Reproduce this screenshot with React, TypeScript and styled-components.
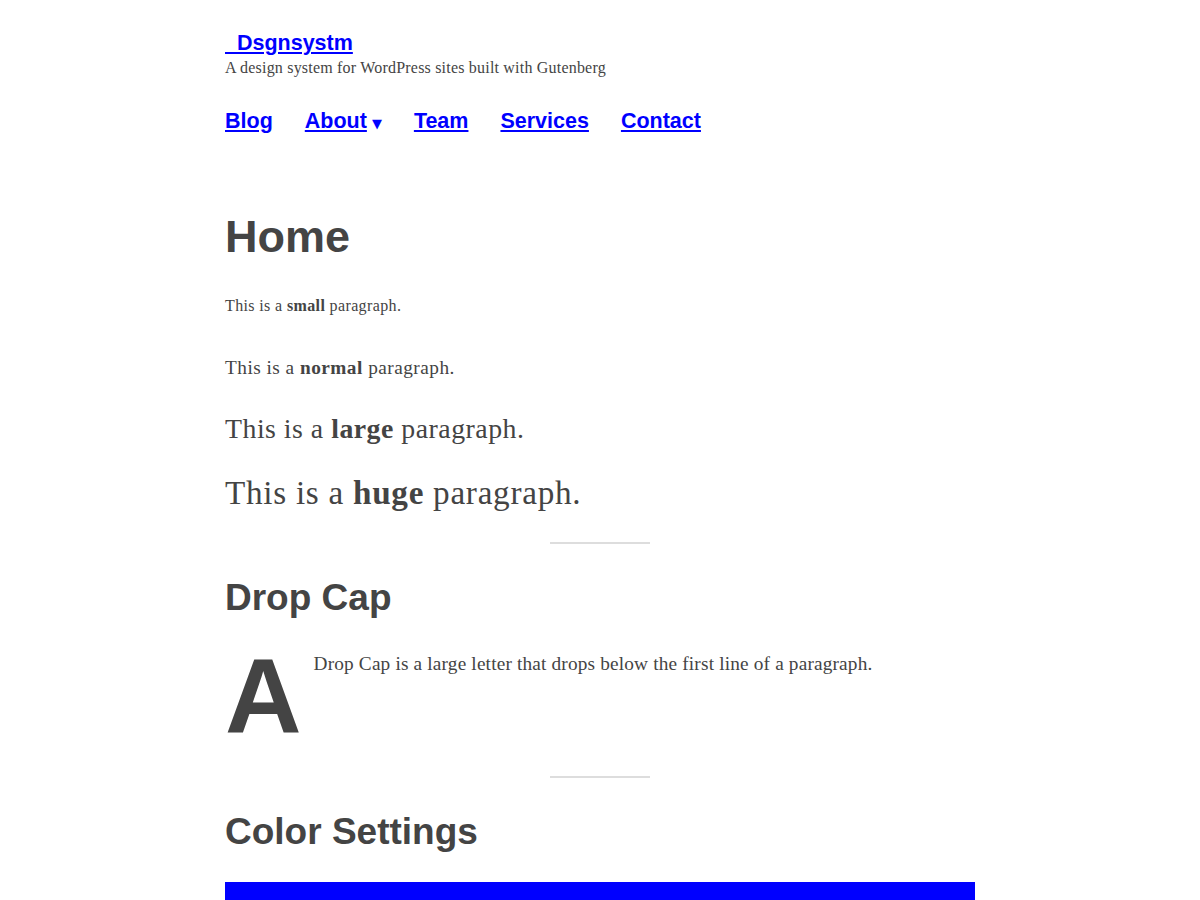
import React from "react";
import styled, { createGlobalStyle } from "styled-components";

const Global = createGlobalStyle`
  html, body { margin: 0; padding: 0; background: #fff; }
  body { font-family: Georgia, "Liberation Serif", serif; color: #444; }
`;

const Page = styled.div`
  width: 750px;
  margin: 0 auto;
  padding-top: 30px;
`;

const Header = styled.header`
  display: flex;
  flex-direction: column;
`;

const SiteTitle = styled.a`
  font-family: "Liberation Sans", Arial, sans-serif;
  font-weight: 700;
  font-size: 21.5px;
  line-height: 26px;
  color: #0000ff;
  text-decoration: underline;
  align-self: flex-start;
  white-space: pre;
`;

const Tagline = styled.p`
  margin: 0;
  font-size: 16px;
  letter-spacing: 0.2px;
  line-height: 24px;
  color: #444;
`;

const Nav = styled.nav`
  display: flex;
  gap: 32px;
  margin-top: 27px;
`;

const NavItem = styled.span`
  display: inline-flex;
  align-items: baseline;
`;

const NavLink = styled.a`
  font-family: "Liberation Sans", Arial, sans-serif;
  font-weight: 700;
  font-size: 21.5px;
  line-height: 28px;
  color: #0000ff;
  text-decoration: underline;
`;

const Caret = styled.span`
  font-family: "DejaVu Sans", sans-serif;
  font-size: 13px;
  margin-left: 5px;
  color: #0000ff;
`;

const Main = styled.main`
  margin-top: 74px;
`;

const H1 = styled.h1`
  font-family: "Liberation Sans", Arial, sans-serif;
  font-weight: 700;
  font-size: 45px;
  line-height: 56px;
  margin: 0 0 28px;
  color: #444;
`;

const H2 = styled.h2`
  font-family: "Liberation Sans", Arial, sans-serif;
  font-weight: 700;
  font-size: 37px;
  line-height: 44px;
  margin: 0 0 28px;
  color: #444;
`;

const Para = styled.p<{ $size: number; $gap: number; $track: number }>`
  margin: 0 0 ${(p) => p.$gap}px;
  font-size: ${(p) => p.$size}px;
  letter-spacing: ${(p) => p.$track}px;
  line-height: 1.6;
  color: #444;
`;

const Sep = styled.hr`
  width: 100px;
  height: 2px;
  border: 0;
  background: #dddddd;
  margin: 0 auto 32px;
`;

const DropRow = styled.div`
  display: flex;
  align-items: flex-start;
  gap: 12px;
  margin-bottom: 32px;
`;

const Cap = styled.span`
  font-family: "Liberation Sans", Arial, sans-serif;
  font-weight: 700;
  font-size: 106px;
  line-height: 96px;
  color: #444;
`;

const DropText = styled.p`
  margin: 1px 0 0;
  font-size: 19.3px;
  letter-spacing: 0.17px;
  line-height: 1.6;
`;

const Bar = styled.div`
  height: 40px;
  background: #0000ff;
  margin-top: 6px;
`;

export default function App() {
  return (
    <>
      <Global />
      <Page>
        <Header>
          <SiteTitle href="#">{"  Dsgnsystm"}</SiteTitle>
          <Tagline>A design system for WordPress sites built with Gutenberg</Tagline>
          <Nav>
            <NavLink href="#">Blog</NavLink>
            <NavItem>
              <NavLink href="#">About</NavLink>
              <Caret>▼</Caret>
            </NavItem>
            <NavLink href="#">Team</NavLink>
            <NavLink href="#">Services</NavLink>
            <NavLink href="#">Contact</NavLink>
          </Nav>
        </Header>
        <Main>
          <H1>Home</H1>
          <Para $size={16} $gap={34} $track={0.37}>
            This is a <strong>small</strong> paragraph.
          </Para>
          <Para $size={19.3} $gap={24} $track={0.48}>
            This is a <strong>normal</strong> paragraph.
          </Para>
          <Para $size={27.8} $gap={14} $track={0.5}>
            This is a <strong>large</strong> paragraph.
          </Para>
          <Para $size={33.2} $gap={23} $track={0.72}>
            This is a <strong>huge</strong> paragraph.
          </Para>
          <Sep />
          <H2>Drop Cap</H2>
          <DropRow>
            <Cap>A</Cap>
            <DropText>Drop Cap is a large letter that drops below the first line of a paragraph.</DropText>
          </DropRow>
          <Sep />
          <H2>Color Settings</H2>
          <Bar />
        </Main>
      </Page>
    </>
  );
}
